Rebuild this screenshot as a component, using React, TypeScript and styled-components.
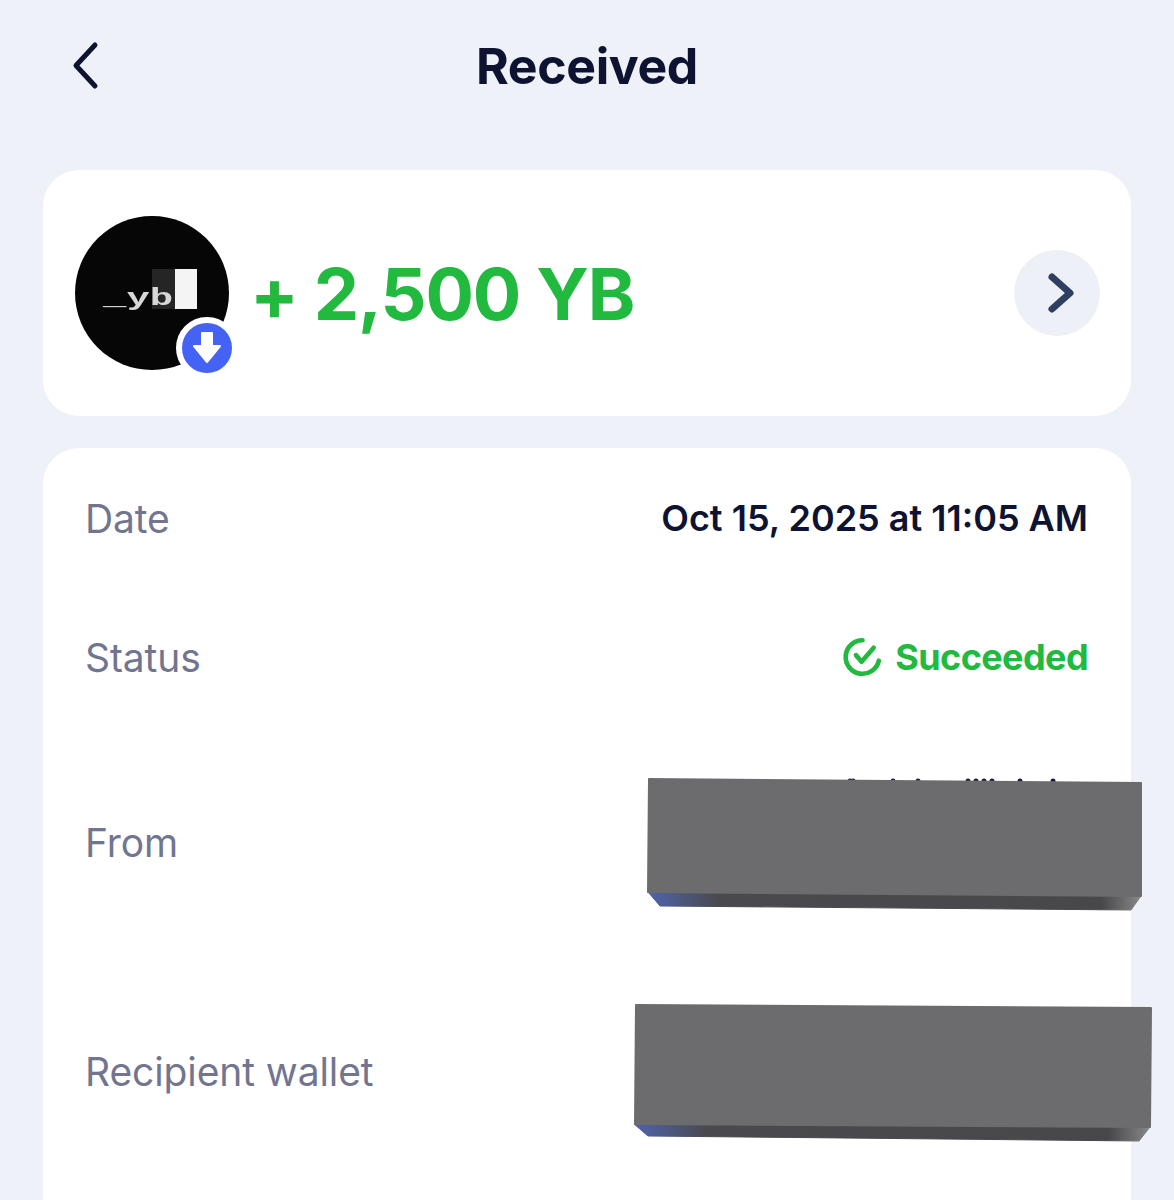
import type { ReactNode } from "react";
import styled, { createGlobalStyle } from "styled-components";

const GlobalStyle = createGlobalStyle`
  html, body {
    margin: 0;
    padding: 0;
    background-color: #eef1f7;
    font-family: "Inter", "Liberation Sans", sans-serif;
  }
`;

const Page = styled.div`
  height: 1200px;
  overflow: hidden;
  padding: 0 43px;
  box-sizing: border-box;
`;

const Header = styled.header`
  height: 132px;
  margin-bottom: 38px;
  display: grid;
  grid-template-columns: 1fr auto 1fr;
  align-items: center;
`;

const BackIcon = styled.svg`
  width: 32px;
  height: 50px;
  margin-left: 28px;
  display: block;
`;

const Title = styled.h1`
  margin: 0;
  color: #0d1330;
  font-size: 50px;
  font-weight: 700;
  letter-spacing: -0.4px;
`;

const Card = styled.section`
  background-color: #fff;
  border-radius: 36px;
`;

const SummaryCard = styled(Card)`
  height: 246px;
  margin-bottom: 32px;
  padding: 0 31px 0 32px;
  display: flex;
  align-items: center;
`;

const Avatar = styled.div`
  position: relative;
  width: 154px;
  height: 154px;
  flex-shrink: 0;
  border-radius: 50%;
  background-color: #060606;
`;

const AvatarMark = styled.div`
  height: 100%;
  box-sizing: border-box;
  padding: 0 0 8px 28px;
  display: flex;
  align-items: center;
  filter: blur(0.7px);
`;

const AvatarText = styled.span`
  width: 72px;
  height: 40px;
  display: flex;
  align-items: flex-end;
  background: linear-gradient(to right, transparent 49px, #252525 49px);
`;

const AvatarGlyphs = styled.span`
  color: #d6d6d6;
  font-family: "Liberation Mono", monospace;
  font-size: 39px;
  line-height: 34px;
  font-weight: 700;
  transform: scaleY(0.62);
  transform-origin: left bottom;
`;

const AvatarCursor = styled.span`
  width: 22px;
  height: 40px;
  background-color: #f4f4f4;
`;

const Badge = styled.div`
  position: absolute;
  right: -9px;
  bottom: -9px;
  width: 62px;
  height: 62px;
  box-sizing: border-box;
  border: 6px solid #fff;
  border-radius: 50%;
  background-color: #4463f5;
  display: flex;
  align-items: center;
  justify-content: center;
`;

const Amount = styled.div`
  margin-left: 21px;
  flex: 1;
  color: #22b93f;
  font-size: 72px;
  font-weight: 700;
  letter-spacing: -1.1px;
`;

const RoundButton = styled.button`
  width: 86px;
  height: 86px;
  padding: 0 0 0 8px;
  border: 0;
  border-radius: 50%;
  background-color: #edf0f6;
  display: flex;
  align-items: center;
  justify-content: center;
`;

const DetailsCard = styled(Card)`
  padding: 0 43px;
  min-height: 800px;
`;

const Row = styled.div<{ $height: number }>`
  position: relative;
  height: ${({ $height }) => $height}px;
  display: flex;
  align-items: center;
  justify-content: space-between;
`;

const Label = styled.span`
  color: #72758f;
  font-size: 39px;
  font-weight: 400;
  letter-spacing: -0.1px;
  margin: -2px 0 0 -1px;
`;

const Value = styled.span`
  color: #0d1330;
  font-size: 36px;
  font-weight: 600;
  margin-top: -2px;
`;

const StatusValue = styled(Value)`
  color: #22b93f;
  font-weight: 700;
  letter-spacing: -0.6px;
  display: flex;
  align-items: center;
  gap: 12px;
`;

const Redaction = styled.svg<{ $left: number; $top: number }>`
  position: absolute;
  left: ${({ $left }) => $left}px;
  top: ${({ $top }) => $top}px;
  overflow: visible;
`;

type RedactionBarProps = {
  id: string;
  left: number;
  top: number;
  width: number;
  height: number;
  face: string;
  bevel: string;
  children?: ReactNode;
};

function RedactionBar(props: RedactionBarProps) {
  const { id, left, top, width, height, face, bevel, children } = props;
  return (
    <Redaction $left={left} $top={top} width={width} height={height} viewBox={`0 0 ${width} ${height}`}>
      <defs>
        <linearGradient id={id} x1="0" x2="1" y1="0" y2="0">
          <stop offset="0" stopColor="#4f63ad" />
          <stop offset="0.14" stopColor="#4a4a4e" />
          <stop offset="0.92" stopColor="#48484b" />
          <stop offset="1" stopColor="#88888a" />
        </linearGradient>
      </defs>
      {children}
      <polygon points={bevel} fill={`url(#${id})`} stroke={`url(#${id})`} strokeWidth="1" strokeLinejoin="round" />
      <polygon points={face} fill="#6c6c6e" stroke="#6c6c6e" strokeWidth="2" strokeLinejoin="round" />
    </Redaction>
  );
}

// tips of the covered address that stick out above the bar
const addressTips = [202, 205, 245, 270, 320, 328, 336, 344, 372, 405];

function App() {
  return (
    <Page>
      <GlobalStyle />
      <Header>
        <BackIcon viewBox="0 0 32 50" fill="none">
          <path d="M24 4 L5 24.5 L24 45" stroke="#0d1330" strokeWidth="5" strokeLinecap="round" strokeLinejoin="round" />
        </BackIcon>
        <Title>Received</Title>
      </Header>

      <SummaryCard>
        <Avatar>
          <AvatarMark>
            <AvatarText>
              <AvatarGlyphs>_yb</AvatarGlyphs>
            </AvatarText>
            <AvatarCursor />
          </AvatarMark>
          <Badge>
            <svg width="30" height="34" viewBox="0 0 30 34" fill="none">
              <path d="M10 2 H20 V15 H28 L15 31 L2 15 H10 Z" fill="#fff" stroke="#fff" strokeWidth="2" strokeLinejoin="round" />
            </svg>
          </Badge>
        </Avatar>
        <Amount>+ 2,500 YB</Amount>
        <RoundButton>
          <svg width="36" height="44" viewBox="0 0 36 44" fill="none">
            <path d="M9 6 L27 22 L9 38" stroke="#2f3f5f" strokeWidth="7" strokeLinecap="round" strokeLinejoin="round" />
          </svg>
        </RoundButton>
      </SummaryCard>

      <DetailsCard>
        <Row $height={142}>
          <Label>Date</Label>
          <Value>Oct 15, 2025 at 11:05 AM</Value>
        </Row>
        <Row $height={136}>
          <Label>Status</Label>
          <StatusValue>
            <svg width="41" height="44" viewBox="0 0 44 44" fill="none">
              <path d="M22 4 A18 18 0 1 0 39.5 26" stroke="#22b93f" strokeWidth="5" strokeLinecap="round" />
              <path d="M15 20 L21 27 L34 12" stroke="#22b93f" strokeWidth="5" strokeLinecap="round" strokeLinejoin="round" />
            </svg>
            Succeeded
          </StatusValue>
        </Row>
        <Row $height={234}>
          <Label>From</Label>
          <RedactionBar
            id="bevelFrom"
            left={562}
            top={52}
            width={495}
            height={134}
            face="1,1 493,5 493,118 0,114"
            bevel="0,114 493,118 483,132 12,128"
          >
            {addressTips.map((x) => (
              <circle key={x} cx={x} cy={3} r={2.5} fill="#1a1d33" />
            ))}
          </RedactionBar>
        </Row>
        <Row $height={224}>
          <Label>Recipient wallet</Label>
          <RedactionBar
            id="bevelWallet"
            left={548}
            top={44}
            width={519}
            height={139}
            face="2,1 517,4 516,123 1,120"
            bevel="0,120 516,123 505,137 14,132"
          />
        </Row>
      </DetailsCard>
    </Page>
  );
}

export default App;
